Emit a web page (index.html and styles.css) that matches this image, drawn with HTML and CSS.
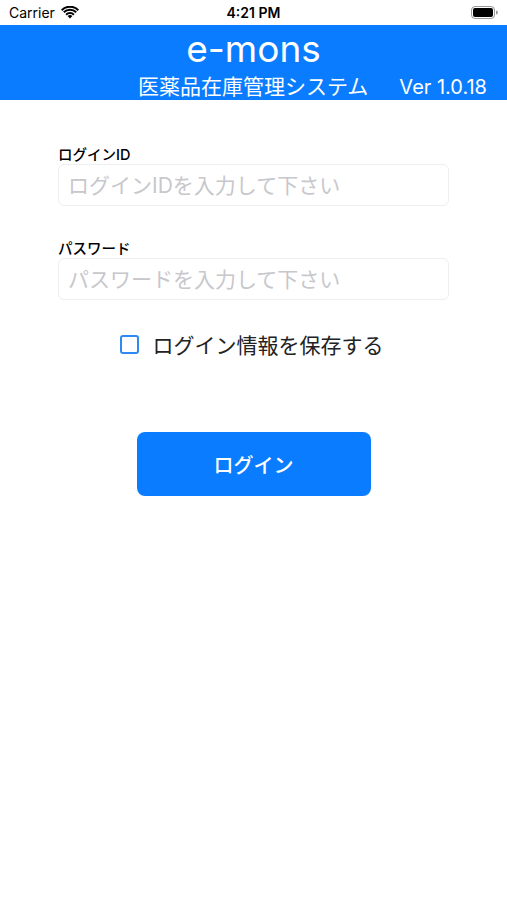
FILE: index.html
```html
<!DOCTYPE html>
<html lang="ja">
<head>
<meta charset="utf-8">
<title>e-mons ログイン</title>
<link rel="stylesheet" href="styles.css">
</head>
<body>
<div class="status">
  <div class="status-left">
    <span>Carrier</span>
    <svg class="wifi" width="18" height="13" viewBox="0 0 18 13">
      <path d="M9 12.6 L6.6 10.1 A3.4 3.4 0 0 1 11.4 10.1 Z" fill="#000"/>
      <path d="M4.4 7.9 A6.5 6.5 0 0 1 13.6 7.9 L12.2 9.4 A4.5 4.5 0 0 0 5.8 9.4 Z" fill="#000"/>
      <path d="M2.1 5.6 A9.8 9.8 0 0 1 15.9 5.6 L14.5 7.1 A7.8 7.8 0 0 0 3.5 7.1 Z" fill="#000"/>
      <path d="M0 3.4 A12.8 12.8 0 0 1 18 3.4 L16.6 4.9 A10.8 10.8 0 0 0 1.4 4.9 Z" fill="#000"/>
    </svg>
  </div>
  <div class="status-time">4:21 PM</div>
  <div class="status-right">
    <svg width="27" height="13" viewBox="0 0 27 13">
      <rect x="0.5" y="0.5" width="23" height="12" rx="3.5" fill="none" stroke="#000" stroke-opacity="0.4"/>
      <rect x="2" y="2" width="20" height="9" rx="2" fill="#000"/>
      <path d="M25 4.5 A2 2 0 0 1 25 8.5 Z" fill="#000" fill-opacity="0.4"/>
    </svg>
  </div>
</div>

<div class="header">
  <div class="title">e-mons</div>
  <div class="subrow">
    <span class="subtitle">医薬品在庫管理システム</span>
    <span class="version">Ver 1.0.18</span>
  </div>
</div>

<form class="login">
  <div class="field">
    <label for="loginid">ログインID</label>
    <input type="text" id="loginid" placeholder="ログインIDを入力して下さい">
  </div>
  <div class="field">
    <label for="password">パスワード</label>
    <input type="password" id="password" placeholder="パスワードを入力して下さい">
  </div>
  <div class="remember">
    <span class="box"></span>
    <span>ログイン情報を保存する</span>
  </div>
  <div class="actions">
    <button type="button" class="btn">ログイン</button>
  </div>
</form>
</body>
</html>
```

FILE: styles.css
```css
body {
	margin: 0;
	background: #fff;
	font-family: "Inter", "Noto Sans CJK JP", sans-serif;
	color: #000;
}

.status {
	height: 25px;
	display: flex;
	align-items: center;
	justify-content: space-between;
	padding: 0 9px 0 9px;
	font-size: 14px;
}

.status-left {
	display: flex;
	align-items: center;
	gap: 6px;
	width: 120px;
}

.status-time {
	font-weight: 600;
}

.status-right {
	width: 120px;
	display: flex;
	justify-content: flex-end;
}

.header {
	background: #0a7cff;
	height: 75px;
	color: #fff;
	display: flex;
	flex-direction: column;
	align-items: center;
}

.title {
	font-size: 37px;
	line-height: 46px;
	margin-top: 1px;
}

.subrow {
	align-self: stretch;
	display: flex;
	justify-content: flex-end;
	align-items: baseline;
	gap: 31px;
	padding-right: 20px;
	margin-top: 2px;
	font-size: 21px;
	line-height: 26px;
}

.version {
	font-size: 20px;
}

.login {
	padding: 46px 58px 0 58px;
}

.field {
	margin-bottom: 34px;
}

.field label {
	display: block;
	font-size: 14.5px;
	font-weight: 500;
	line-height: 18px;
}

.field input {
	display: block;
	box-sizing: border-box;
	width: 391px;
	height: 42px;
	border: 1px solid #eeeeee;
	border-radius: 6px;
	padding: 0 9px;
	font-family: inherit;
	font-size: 21px;
	outline: none;
}

.field input::placeholder {
	color: #c7c7cc;
}

.remember {
	display: flex;
	align-items: center;
	justify-content: center;
	gap: 14px;
	font-size: 21px;
	color: #222;
	margin-top: -5px;
	margin-left: -4px;
}

.box {
	width: 15px;
	height: 15px;
	border: 2px solid #2f89f5;
	border-radius: 3px;
}

.actions {
	display: flex;
	justify-content: center;
	padding-top: 73px;
}

.btn {
	width: 234px;
	height: 64px;
	border: none;
	border-radius: 8px;
	background: #0a7cff;
	color: #fff;
	font-family: inherit;
	font-size: 20px;
	font-weight: 500;
}
```
